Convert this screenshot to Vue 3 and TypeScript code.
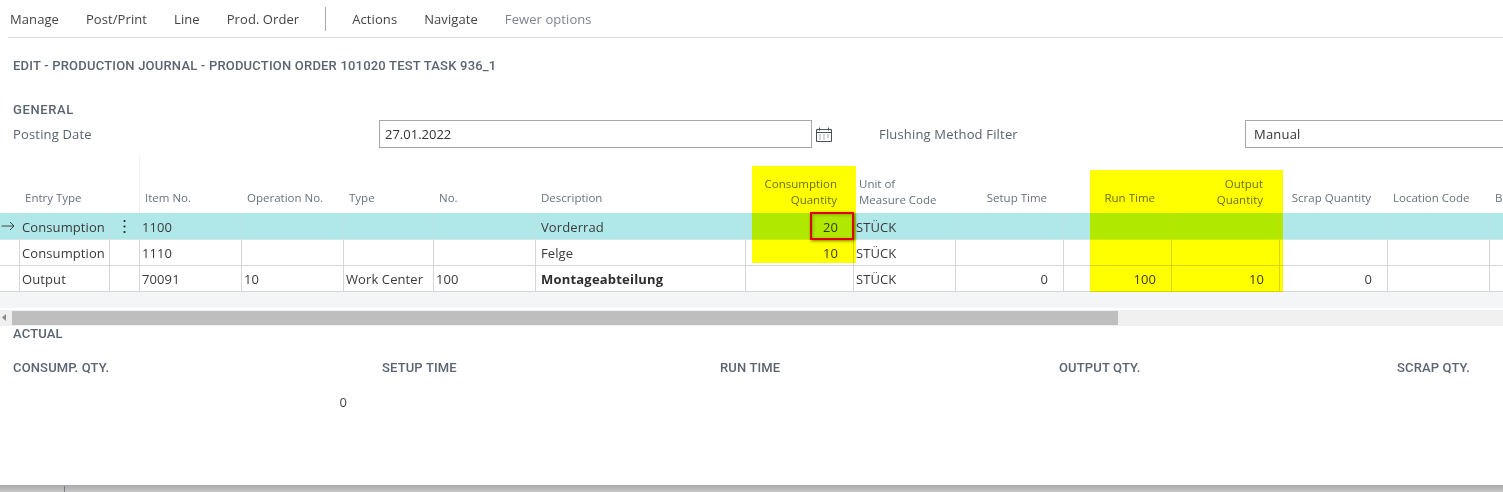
<script setup lang="ts">
interface Col { key: string; title: string[]; right?: boolean }
const cols: Col[] = [
  { key: 'arrow', title: [] },
  { key: 'entry', title: ['Entry Type'] },
  { key: 'menu', title: [] },
  { key: 'item', title: ['Item No.'] },
  { key: 'op', title: ['Operation No.'] },
  { key: 'type', title: ['Type'] },
  { key: 'no', title: ['No.'] },
  { key: 'desc', title: ['Description'] },
  { key: 'cons', title: ['Consumption', 'Quantity'], right: true },
  { key: 'uom', title: ['Unit of', 'Measure Code'] },
  { key: 'setup', title: ['Setup Time'], right: true },
  { key: 'run', title: ['Run Time'], right: true },
  { key: 'out', title: ['Output', 'Quantity'], right: true },
  { key: 'scrap', title: ['Scrap Quantity'], right: true },
  { key: 'loc', title: ['Location Code'] },
  { key: 'bin', title: ['Bin Code'] },
]
const rows: Record<string, string>[] = [
  { entry: 'Consumption', item: '1100', desc: 'Vorderrad', cons: '20', uom: 'STÜCK' },
  { entry: 'Consumption', item: '1110', desc: 'Felge', cons: '10', uom: 'STÜCK' },
  { entry: 'Output', item: '70091', op: '10', type: 'Work Center', no: '100', desc: 'Montageabteilung', uom: 'STÜCK', setup: '0', run: '100', out: '10', scrap: '0' },
]
const menus = ['Manage', 'Post/Print', 'Line', 'Prod. Order']
const moreMenus = ['Actions', 'Navigate']
const totals = ['CONSUMP. QTY.', 'SETUP TIME', 'RUN TIME', 'OUTPUT QTY.', 'SCRAP QTY.']
</script>

<template>
  <div class="page">
    <nav class="toolbar">
      <span v-for="m in menus" :key="m" class="tb">{{ m }}</span>
      <i class="sep"></i>
      <span v-for="m in moreMenus" :key="m" class="tb">{{ m }}</span>
      <span class="tb dim">Fewer options</span>
    </nav>

    <h1 class="title">EDIT - PRODUCTION JOURNAL - PRODUCTION ORDER 101020 TEST TASK 936_1</h1>

    <section class="general">
      <h2 class="cap wide">GENERAL</h2>
      <div class="fields">
        <label class="lbl first">Posting Date</label>
        <div class="input date">27.01.2022</div>
        <svg class="cal" width="16" height="15" viewBox="0 0 16 15" fill="none">
          <path d="M0.5 2.5h15v12h-15z" stroke="#4a515c" />
          <path d="M1 5.5h14" stroke="#4a515c" />
          <path d="M3.5 0.5v3M12.5 0.5v3" stroke="#4a515c" />
          <path d="M3 8h2M7 8h2M11 8h2M3 10h2M7 10h2M11 10h2M3 12h2M7 12h2" stroke="#a4a9b0" />
        </svg>
        <label class="lbl second">Flushing Method Filter</label>
        <div class="input manual">Manual</div>
      </div>
    </section>

    <section class="grid">
      <div class="row head">
        <div v-for="c in cols" :key="c.key" class="th" :class="[c.key, { right: c.right, two: c.title.length > 1 }]">
          <span v-for="t in c.title" :key="t">{{ t }}</span>
        </div>
      </div>
      <div v-for="(r, i) in rows" :key="i" class="row body" :class="{ selected: i === 0 }">
        <div v-for="c in cols" :key="c.key" class="td" :class="[c.key, { right: c.right }]">
          <svg v-if="c.key === 'arrow' && i === 0" width="14" height="10" viewBox="0 0 14 10" fill="none" stroke="#333" stroke-width="0.9">
            <path d="M0.5 5h12.5M9 1l4 4-4 4" />
          </svg>
          <svg v-else-if="c.key === 'menu' && i === 0" class="dots" width="3" height="15" viewBox="0 0 3 15" fill="#222">
            <circle cx="1.5" cy="2" r="1.1" />
            <circle cx="1.5" cy="7.5" r="1.1" />
            <circle cx="1.5" cy="13" r="1.1" />
          </svg>
          <template v-else>{{ r[c.key] }}</template>
        </div>
      </div>
    </section>

    <div class="gap"></div>
    <div class="scrollbar">
      <svg class="sarrow" width="4" height="7" viewBox="0 0 4 7" fill="#8a8a8a"><path d="M4 0v7L0 3.5z" /></svg>
      <div class="thumb"></div>
    </div>

    <section class="actual">
      <h2 class="cap">ACTUAL</h2>
      <div class="totals">
        <div v-for="(t, i) in totals" :key="t" class="total">
          <span class="cap">{{ t }}</span>
          <span v-if="i === 0" class="value">0</span>
        </div>
      </div>
    </section>

    <footer class="bottom"><i></i></footer>

    <div class="mark mark-a"></div>
    <div class="mark mark-b"></div>
    <div class="redbox"></div>
  </div>
</template>

<style>
html, body { margin: 0; background: #fff; }
</style>

<style scoped>
.page {
  position: relative;
  width: 1503px;
  height: 492px;
  overflow: hidden;
  display: flex;
  flex-direction: column;
  background: #fff;
  font-family: "Open Sans", "Noto Sans", sans-serif;
  font-size: 13px;
  color: #333;
}
.toolbar {
  height: 37px;
  margin-left: 8px;
  padding-left: 2px;
  display: flex;
  align-items: center;
  border-bottom: 1px solid #d9d9d9;
  flex: none;
}
.tb { margin-right: 27px; color: #444; letter-spacing: 0.08px; }
.dim { color: #7c8590; }
.sep { width: 1px; height: 24px; background: #a8a8a8; margin: 0 26px 0 -1px; }
.title {
  margin: 20px 0 0 13px;
  font: 500 13px/16px Roboto, sans-serif;
  color: #5a6472;
  letter-spacing: 0.2px;
  height: 16px;
  flex: none;
}
.general { margin: 28px 0 0 13px; height: 49px; flex: none; }
.cap {
  margin: 0;
  font: 500 13px/16px Roboto, sans-serif;
  color: #5a6472;
  letter-spacing: 0.15px;
}
.general .cap { height: 11px; line-height: 16px; }
.cap.wide { letter-spacing: 0.6px; }
.fields { display: flex; align-items: center; height: 28px; margin-top: 7px; }
.lbl { color: #5a6472; letter-spacing: 0.17px; flex: none; }
.first { width: 366px; }
.input {
  box-sizing: border-box;
  height: 28px;
  border: 1px solid #a6a6a6;
  line-height: 26px;
  padding-left: 5px;
  color: #333;
  flex: none;
}
.date { width: 433px; }
.cal { margin-left: 4px; flex: none; }
.second { margin-left: 47px; width: 366px; }
.manual { width: 300px; padding-left: 8px; letter-spacing: 0.2px; }

.grid { margin-top: 6px; flex: none; }
.row {
  display: grid;
  grid-template-columns: 20px 90px 30px 102px 102px 90px 102px 210px 108px 102px 108px 108px 108px 108px 102px 102px;
  width: 1600px;
}
.head { height: 56px; }
.th {
  box-sizing: border-box;
  display: flex;
  flex-direction: column;
  justify-content: flex-end;
  padding: 0 0 7px 5px;
  font-size: 11.5px;
  line-height: 16px;
  color: #68727f;
  white-space: nowrap;
}
.th.two { padding-bottom: 5px; }
.th.right { align-items: flex-end; padding-right: 17px; }
.th.menu { border-right: 1px solid #f0f0f0; }
.body { height: 26px; background: #fff; border-bottom: 1px solid #d6d6d6; box-sizing: border-box; }
.body.selected { height: 27px; background: #b0e8ea; border-bottom-color: #d2e8ea; }
.td {
  box-sizing: border-box;
  border-right: 1px solid #d6d6d6;
  padding: 0 2px;
  display: flex;
  align-items: center;
  color: #3a3a3a;
  white-space: nowrap;
  letter-spacing: 0.1px;
}
.selected .td { border-right-color: #bde0e2; padding-top: 1px; }
.td.right { justify-content: flex-end; padding-right: 15px; }
.td.desc { padding-left: 5px; }
.td.arrow { padding: 0 0 0 1px; }
.td.menu { justify-content: center; padding: 0; }
.body:nth-child(4) .td.desc { font-weight: 700; color: #2e2e2e; letter-spacing: 0.2px; }

.gap { height: 16px; background: #f4f5f7; border-bottom: 2px solid #fff; flex: none; }
.scrollbar {
  height: 16px;
  background: #f0f0f0;
  display: flex;
  align-items: flex-start;
  flex: none;
}
.sarrow { margin: 4px 0 0 2px; flex: none; }
.thumb { margin: 1px 0 0 6px; width: 1106px; height: 14px; background: #bebebe; }

.actual { padding: 1px 0 0 13px; flex: none; }
.actual > .cap { height: 14px; line-height: 14px; }
.totals {
  display: grid;
  grid-template-columns: 369px 338px 339px 338px 1fr;
  margin-top: 19px;
}
.total { display: flex; flex-direction: column; }
.value { width: 334px; text-align: right; margin-top: 17px; color: #444; }

.bottom {
  margin-top: auto;
  height: 7px;
  background: linear-gradient(#a9a9a9, #c8c8c8);
  flex: none;
  position: relative;
}
.bottom i { position: absolute; left: 64px; top: 1px; width: 1px; height: 6px; background: #7d7d85; }

.mark { position: absolute; background: #ffff00; mix-blend-mode: multiply; }
.mark-a { left: 752px; top: 166px; width: 104px; height: 97px; }
.mark-b { left: 1090px; top: 170px; width: 193px; height: 122px; }
.redbox {
  position: absolute;
  left: 810px;
  top: 212px;
  width: 44px;
  height: 28px;
  box-sizing: border-box;
  border: 2px solid #e00000;
  box-shadow: 1px 1px 3px rgba(0, 0, 0, 0.5), inset 1px 1px 3px rgba(0, 0, 0, 0.25);
}
</style>
